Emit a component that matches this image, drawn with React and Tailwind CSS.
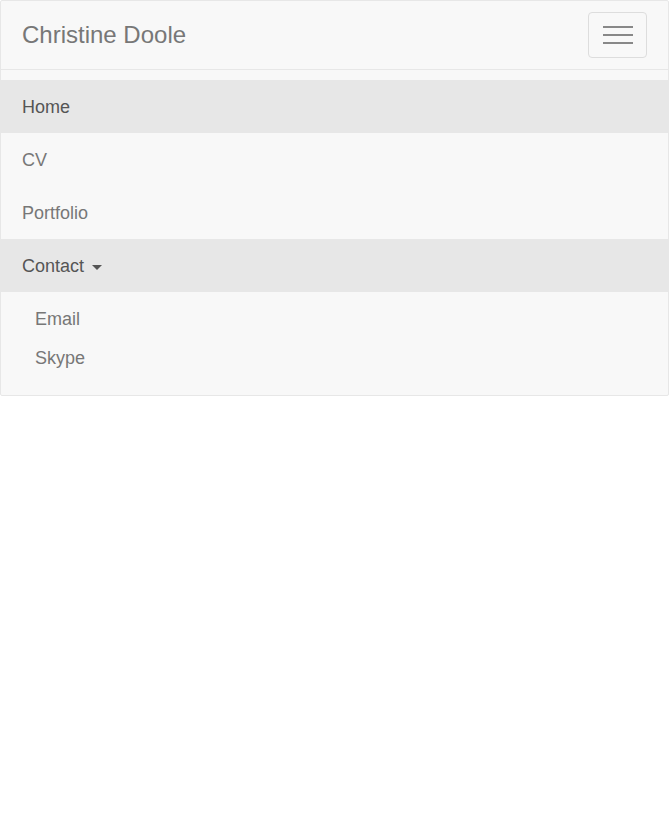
export default function App() {
  return (
    <div className="w-[670px] min-h-[839px] bg-white" style={{ fontFamily: '"Liberation Sans", Arial, sans-serif' }}>
      <nav className="w-[669px] border border-[#e7e7e7] bg-[#f8f8f8] rounded-[2px]">
        <div className="h-[68px] flex items-center justify-between pl-[21px] pr-[21px]">
          <span className="text-[24px] leading-none text-[#777]">Christine Doole</span>
          <button className="w-[59px] h-[46px] border border-[#ddd] rounded-[4px] flex flex-col items-center justify-center gap-[6px] mb-[1px]">
            <span className="block w-[30px] h-[2px] bg-[#888]" />
            <span className="block w-[30px] h-[2px] bg-[#888]" />
            <span className="block w-[30px] h-[2px] bg-[#888]" />
          </button>
        </div>
        <div className="border-t border-[#e7e7e7] pt-[10px]">
          <div className="h-[53px] flex items-center pl-[21px] pt-[2px] bg-[#e7e7e7] text-[18px] text-[#555]">Home</div>
          <div className="h-[53px] flex items-center pl-[21px] pt-[2px] text-[18px] text-[#777]">CV</div>
          <div className="h-[53px] flex items-center pl-[21px] pt-[2px] text-[18px] text-[#777]">Portfolio</div>
          <div className="h-[53px] flex items-center pl-[21px] pt-[2px] bg-[#e7e7e7] text-[18px] text-[#555]">
            Contact
            <span className="ml-[8px] mt-[1px] w-0 h-0 border-l-[5px] border-r-[5px] border-t-[5px] border-l-transparent border-r-transparent border-t-[#555]" />
          </div>
          <div className="pt-[8px] pb-[17px]">
            <div className="h-[39px] flex items-center pl-[34px] text-[18px] text-[#777]">Email</div>
            <div className="h-[39px] flex items-center pl-[34px] text-[18px] text-[#777]">Skype</div>
          </div>
        </div>
      </nav>
    </div>
  );
}
